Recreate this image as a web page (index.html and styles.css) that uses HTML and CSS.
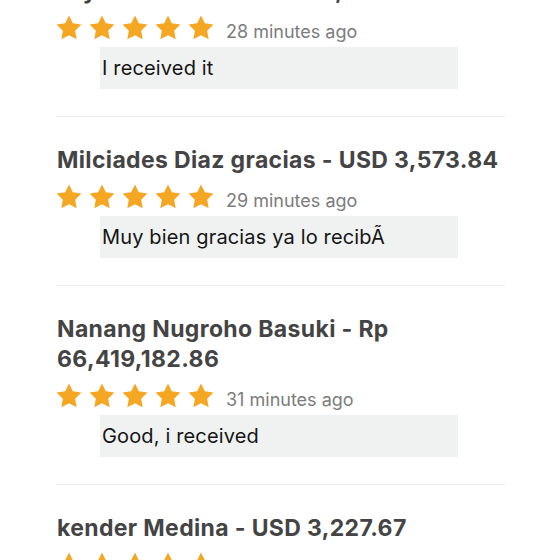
FILE: index.html
```html
<!DOCTYPE html>
<html lang="en">
<head>
  <meta charset="UTF-8">
  <title>Reviews</title>
  <link rel="stylesheet" href="styles.css">
</head>
<body>
  <div class="reviews">
    <div class="review">
      <div class="review-title">Bryan C. Walk - PHP 120,387.48</div>
      <div class="rating">
        <div class="stars">
          <svg viewBox="1.5 1.5 21 21"><path d="M12 2l3.09 6.26L22 9.27l-5 4.87 1.18 6.88L12 17.77l-6.18 3.25L7 14.14 2 9.27l6.91-1.01z"/></svg>
          <svg viewBox="1.5 1.5 21 21"><path d="M12 2l3.09 6.26L22 9.27l-5 4.87 1.18 6.88L12 17.77l-6.18 3.25L7 14.14 2 9.27l6.91-1.01z"/></svg>
          <svg viewBox="1.5 1.5 21 21"><path d="M12 2l3.09 6.26L22 9.27l-5 4.87 1.18 6.88L12 17.77l-6.18 3.25L7 14.14 2 9.27l6.91-1.01z"/></svg>
          <svg viewBox="1.5 1.5 21 21"><path d="M12 2l3.09 6.26L22 9.27l-5 4.87 1.18 6.88L12 17.77l-6.18 3.25L7 14.14 2 9.27l6.91-1.01z"/></svg>
          <svg viewBox="1.5 1.5 21 21"><path d="M12 2l3.09 6.26L22 9.27l-5 4.87 1.18 6.88L12 17.77l-6.18 3.25L7 14.14 2 9.27l6.91-1.01z"/></svg>
        </div>
        <span class="time">28 minutes ago</span>
      </div>
      <div class="comment">I received it</div>
    </div>

    <div class="review">
      <div class="review-title">Milciades Diaz gracias - USD 3,573.84</div>
      <div class="rating">
        <div class="stars">
          <svg viewBox="1.5 1.5 21 21"><path d="M12 2l3.09 6.26L22 9.27l-5 4.87 1.18 6.88L12 17.77l-6.18 3.25L7 14.14 2 9.27l6.91-1.01z"/></svg>
          <svg viewBox="1.5 1.5 21 21"><path d="M12 2l3.09 6.26L22 9.27l-5 4.87 1.18 6.88L12 17.77l-6.18 3.25L7 14.14 2 9.27l6.91-1.01z"/></svg>
          <svg viewBox="1.5 1.5 21 21"><path d="M12 2l3.09 6.26L22 9.27l-5 4.87 1.18 6.88L12 17.77l-6.18 3.25L7 14.14 2 9.27l6.91-1.01z"/></svg>
          <svg viewBox="1.5 1.5 21 21"><path d="M12 2l3.09 6.26L22 9.27l-5 4.87 1.18 6.88L12 17.77l-6.18 3.25L7 14.14 2 9.27l6.91-1.01z"/></svg>
          <svg viewBox="1.5 1.5 21 21"><path d="M12 2l3.09 6.26L22 9.27l-5 4.87 1.18 6.88L12 17.77l-6.18 3.25L7 14.14 2 9.27l6.91-1.01z"/></svg>
        </div>
        <span class="time">29 minutes ago</span>
      </div>
      <div class="comment">Muy bien gracias ya lo recibÃ</div>
    </div>

    <div class="review">
      <div class="review-title">Nanang Nugroho Basuki - Rp 66,419,182.86</div>
      <div class="rating">
        <div class="stars">
          <svg viewBox="1.5 1.5 21 21"><path d="M12 2l3.09 6.26L22 9.27l-5 4.87 1.18 6.88L12 17.77l-6.18 3.25L7 14.14 2 9.27l6.91-1.01z"/></svg>
          <svg viewBox="1.5 1.5 21 21"><path d="M12 2l3.09 6.26L22 9.27l-5 4.87 1.18 6.88L12 17.77l-6.18 3.25L7 14.14 2 9.27l6.91-1.01z"/></svg>
          <svg viewBox="1.5 1.5 21 21"><path d="M12 2l3.09 6.26L22 9.27l-5 4.87 1.18 6.88L12 17.77l-6.18 3.25L7 14.14 2 9.27l6.91-1.01z"/></svg>
          <svg viewBox="1.5 1.5 21 21"><path d="M12 2l3.09 6.26L22 9.27l-5 4.87 1.18 6.88L12 17.77l-6.18 3.25L7 14.14 2 9.27l6.91-1.01z"/></svg>
          <svg viewBox="1.5 1.5 21 21"><path d="M12 2l3.09 6.26L22 9.27l-5 4.87 1.18 6.88L12 17.77l-6.18 3.25L7 14.14 2 9.27l6.91-1.01z"/></svg>
        </div>
        <span class="time">31 minutes ago</span>
      </div>
      <div class="comment">Good, i received</div>
    </div>

    <div class="review">
      <div class="review-title">kender Medina - USD 3,227.67</div>
      <div class="rating">
        <div class="stars">
          <svg viewBox="1.5 1.5 21 21"><path d="M12 2l3.09 6.26L22 9.27l-5 4.87 1.18 6.88L12 17.77l-6.18 3.25L7 14.14 2 9.27l6.91-1.01z"/></svg>
          <svg viewBox="1.5 1.5 21 21"><path d="M12 2l3.09 6.26L22 9.27l-5 4.87 1.18 6.88L12 17.77l-6.18 3.25L7 14.14 2 9.27l6.91-1.01z"/></svg>
          <svg viewBox="1.5 1.5 21 21"><path d="M12 2l3.09 6.26L22 9.27l-5 4.87 1.18 6.88L12 17.77l-6.18 3.25L7 14.14 2 9.27l6.91-1.01z"/></svg>
          <svg viewBox="1.5 1.5 21 21"><path d="M12 2l3.09 6.26L22 9.27l-5 4.87 1.18 6.88L12 17.77l-6.18 3.25L7 14.14 2 9.27l6.91-1.01z"/></svg>
          <svg viewBox="1.5 1.5 21 21"><path d="M12 2l3.09 6.26L22 9.27l-5 4.87 1.18 6.88L12 17.77l-6.18 3.25L7 14.14 2 9.27l6.91-1.01z"/></svg>
        </div>
        <span class="time">32 minutes ago</span>
      </div>
      <div class="comment">Thank you</div>
    </div>
  </div>
</body>
</html>
```

FILE: styles.css
```css
:root {
  --title-color: #444444;
  --text-color: #151515;
  --muted-color: #7c7c7c;
  --star-color: #f5a623;
  --comment-bg: #f0f2f2;
  --border-color: #ececec;
}

body {
  font-family: Inter, 'Liberation Sans', Arial, sans-serif;
  margin: 0;
  padding: 0;
  background-color: #ffffff;
  color: var(--text-color);
  overflow: hidden;
}

.reviews {
  width: 449px;
  margin: -52px 0 0 56px;
}

.review {
  padding: 28px 0 27px;
  border-bottom: 1px solid var(--border-color);
}

.review-title {
  font-size: 23px;
  line-height: 30px;
  font-weight: 700;
  letter-spacing: 0.35px;
  color: var(--title-color);
  padding-left: 1px;
}

.rating {
  display: flex;
  align-items: flex-end;
  height: 26px;
  margin-top: 9px;
}

.stars {
  display: flex;
  gap: 7px;
}

.stars svg {
  display: block;
  width: 26px;
  height: 26px;
  fill: var(--star-color);
}

.time {
  font-size: 18px;
  line-height: 18px;
  color: var(--muted-color);
  margin-left: 12px;
}

.comment {
  margin: 6px 0 0 44px;
  width: 354px;
  padding: 6px 2px;
  font-size: 20px;
  line-height: 30px;
  letter-spacing: 0.15px;
  background-color: var(--comment-bg);
}
```
